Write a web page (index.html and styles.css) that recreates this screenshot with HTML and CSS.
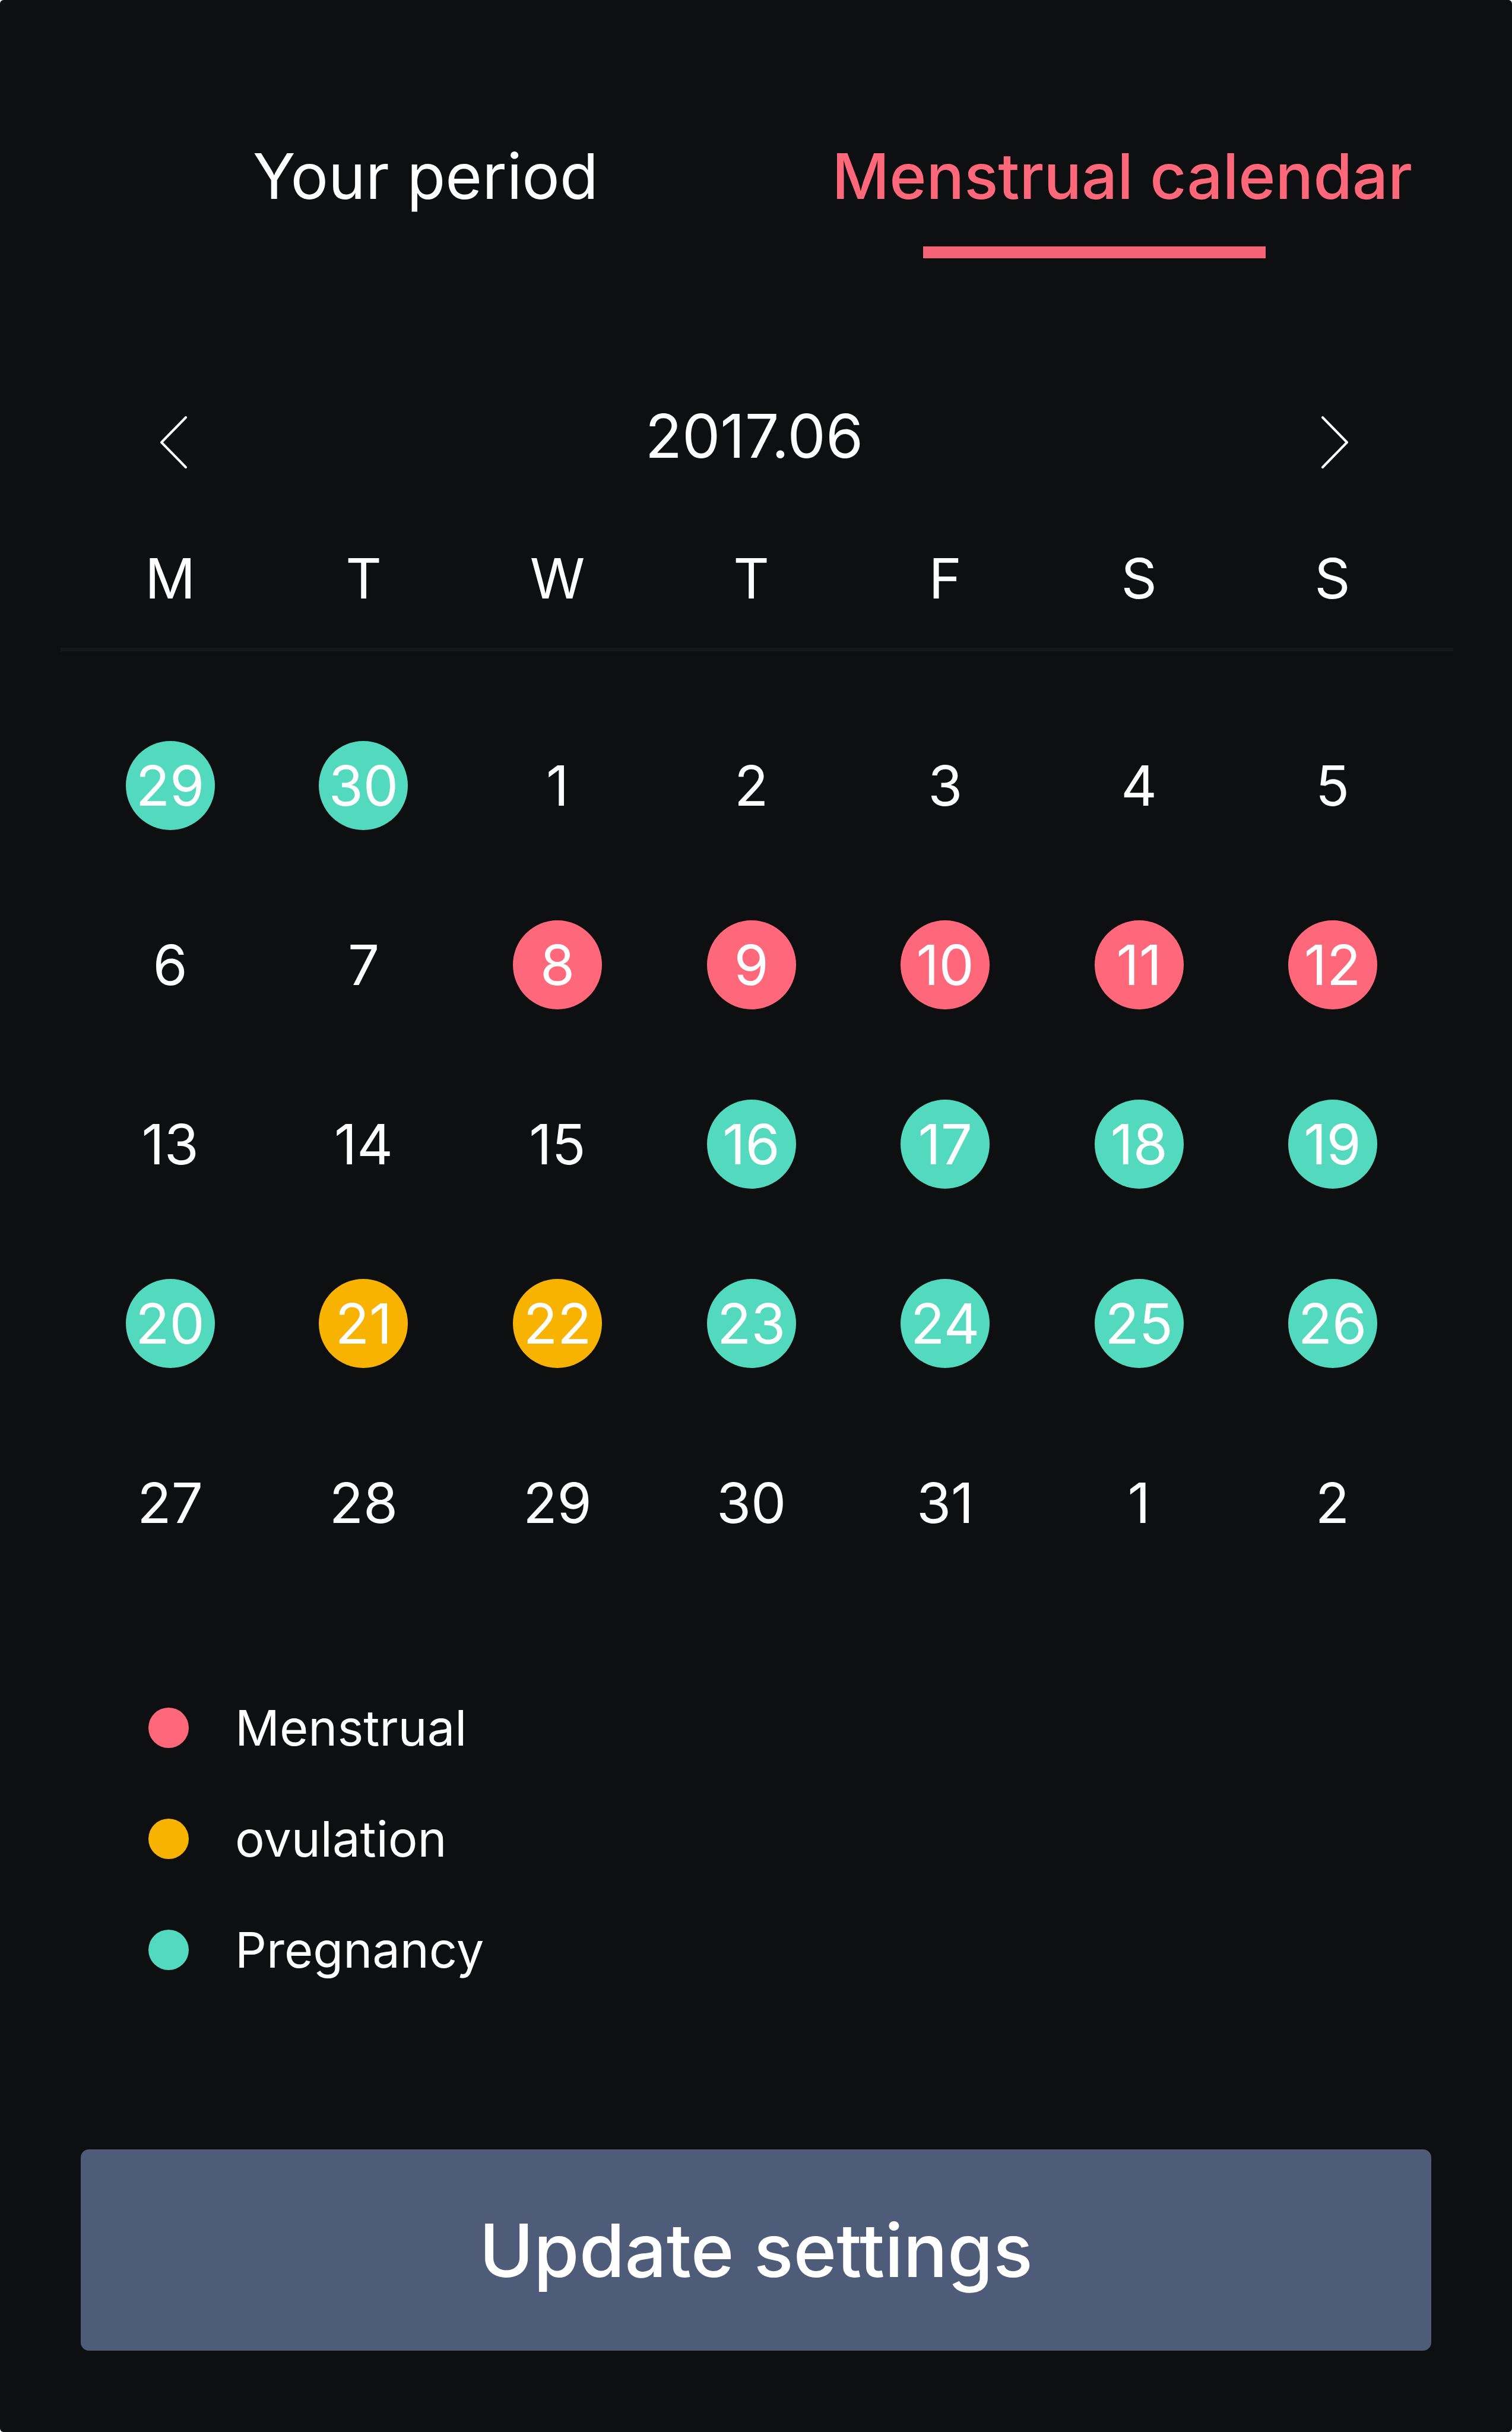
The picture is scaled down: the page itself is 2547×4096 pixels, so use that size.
FILE: index.html
```html
<!DOCTYPE html>
<html lang="en">
<head>
<meta charset="utf-8">
<meta name="viewport" content="width=device-width, initial-scale=1">
<title>Menstrual calendar</title>
<link rel="stylesheet" href="styles.css">
</head>
<body>
<main class="screen">
  <nav class="tabs">
    <a class="tab" href="#period">Your period</a>
    <a class="tab tab-active" href="#calendar" aria-current="page">Menstrual calendar</a>
  </nav>

  <section class="calendar" id="calendar">
    <header class="month">
      <button class="arrow" type="button" aria-label="Previous month">
        <svg viewBox="0 0 46 88" width="46" height="88" aria-hidden="true"><path d="M44 2 3 44l41 42"/></svg>
      </button>
      <h1 class="month-title">2017.06</h1>
      <button class="arrow" type="button" aria-label="Next month">
        <svg viewBox="0 0 46 88" width="46" height="88" aria-hidden="true"><path d="m2 2 41 42L2 86"/></svg>
      </button>
    </header>

    <table class="days">
      <thead>
        <tr><th scope="col">M</th><th scope="col">T</th><th scope="col">W</th><th scope="col">T</th><th scope="col">F</th><th scope="col">S</th><th scope="col">S</th></tr>
      </thead>
      <tbody>
        <tr>
          <td><span class="day pregnancy">29</span></td>
          <td><span class="day pregnancy">30</span></td>
          <td><span class="day">1</span></td>
          <td><span class="day">2</span></td>
          <td><span class="day">3</span></td>
          <td><span class="day">4</span></td>
          <td><span class="day">5</span></td>
        </tr>
        <tr>
          <td><span class="day">6</span></td>
          <td><span class="day">7</span></td>
          <td><span class="day menstrual">8</span></td>
          <td><span class="day menstrual">9</span></td>
          <td><span class="day menstrual">10</span></td>
          <td><span class="day menstrual">11</span></td>
          <td><span class="day menstrual">12</span></td>
        </tr>
        <tr>
          <td><span class="day">13</span></td>
          <td><span class="day">14</span></td>
          <td><span class="day">15</span></td>
          <td><span class="day pregnancy">16</span></td>
          <td><span class="day pregnancy">17</span></td>
          <td><span class="day pregnancy">18</span></td>
          <td><span class="day pregnancy">19</span></td>
        </tr>
        <tr>
          <td><span class="day pregnancy">20</span></td>
          <td><span class="day ovulation">21</span></td>
          <td><span class="day ovulation">22</span></td>
          <td><span class="day pregnancy">23</span></td>
          <td><span class="day pregnancy">24</span></td>
          <td><span class="day pregnancy">25</span></td>
          <td><span class="day pregnancy">26</span></td>
        </tr>
        <tr>
          <td><span class="day">27</span></td>
          <td><span class="day">28</span></td>
          <td><span class="day">29</span></td>
          <td><span class="day">30</span></td>
          <td><span class="day">31</span></td>
          <td><span class="day">1</span></td>
          <td><span class="day">2</span></td>
        </tr>
      </tbody>
    </table>
  </section>

  <ul class="legend">
    <li class="legend-item"><span class="dot menstrual"></span>Menstrual</li>
    <li class="legend-item"><span class="dot ovulation"></span>ovulation</li>
    <li class="legend-item"><span class="dot pregnancy"></span>Pregnancy</li>
  </ul>

  <button class="update" type="button">Update settings</button>
</main>
</body>
</html>
```
FILE: styles.css
```css
:root {
  --ink: #0d0f10;
  --rose: #ff687a;
  --amber: #f8b200;
  --mint: #53d9be;
  --slate: #4e5c79;
}

* {
  box-sizing: border-box;
}

html {
  background: #fff;
}

body {
  margin: 0;
  font-family: Inter, "Liberation Sans", sans-serif;
  color: #fff;
}

.screen {
  display: flex;
  flex-direction: column;
  min-height: 100vh;
  padding: 237px 0 137px;
  border-radius: 6px;
  background: var(--ink);
}

/* Tabs */
.tabs {
  display: grid;
  grid-template-columns: 1fr 1fr;
  padding: 0 70px 0 130px;
}

.tab {
  position: relative;
  height: 198px;
  font-size: 106px;
  line-height: 120px;
  text-align: center;
  white-space: nowrap;
  color: inherit;
  text-decoration: none;
}

.tab-active {
  font-weight: 500;
  color: var(--rose);
}

.tab-active::after {
  content: "";
  position: absolute;
  left: calc(50% - 335px);
  bottom: 0;
  width: 577px;
  height: 20px;
  background: #f66376;
}

/* Month switcher */
.month {
  display: flex;
  align-items: flex-end;
  justify-content: space-between;
  margin-top: 244px;
  padding: 0 275px 0 269px;
}

.month-title {
  margin: 0;
  font-size: 102px;
  font-weight: 400;
  line-height: 110px;
}

.arrow {
  display: block;
  padding: 0;
  border: 0;
  background: none;
}

.arrow svg {
  display: block;
  fill: none;
  stroke: #fff;
  stroke-width: 4;
  stroke-linecap: round;
  stroke-linejoin: round;
}

/* Day grid */
.calendar {
  display: flex;
  flex-direction: column;
}

.days {
  margin: 0 99px 0 102px;
  border-spacing: 0;
  table-layout: fixed;
  font-size: 94px;
  line-height: 110px;
}

.days th {
  padding: 130px 0 62px;
  border-bottom: 6px solid #16181c;
  font-weight: 400;
}

.days tbody::before {
  content: "";
  display: block;
  height: 75px;
}

.days td {
  height: 302px;
  padding: 0;
}

.days th:first-child {
  width: 14.8%;
}

.days th:last-child {
  width: 15.6%;
}

.days tr > :first-child {
  padding-left: 22px;
}

.days tr > :last-child {
  padding-right: 41px;
}

.day {
  display: flex;
  align-items: center;
  justify-content: center;
  width: 150px;
  height: 150px;
  margin: 0 auto;
  border-radius: 50%;
}

.menstrual {
  background: var(--rose);
}

.ovulation {
  background: var(--amber);
}

.pregnancy {
  background: var(--mint);
}

/* Legend */
.legend {
  display: grid;
  gap: 77px;
  margin: 173px 0 0;
  padding: 0 250px;
  list-style: none;
  font-size: 83px;
  line-height: 110px;
}

.legend-item {
  display: flex;
  align-items: center;
  gap: 78px;
}

.dot {
  width: 68px;
  height: 68px;
  border-radius: 50%;
}

/* Main action */
.update {
  height: 339px;
  margin: 281px 136px 0;
  border: 0;
  border-radius: 14px;
  background: var(--slate);
  color: inherit;
  font: 500 124px/140px Inter, "Liberation Sans", sans-serif;
}
```
